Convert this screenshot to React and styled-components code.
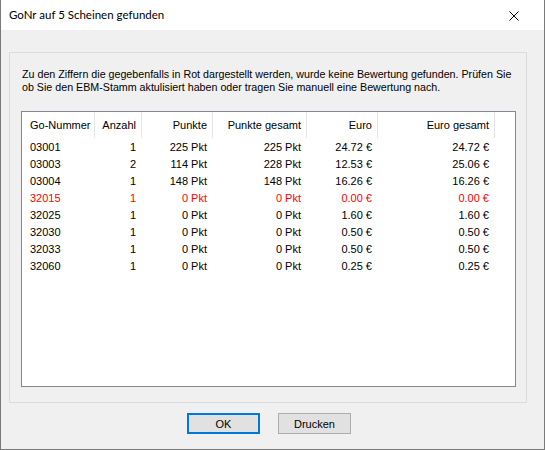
import React from 'react'
import styled, { createGlobalStyle } from 'styled-components'

const rows = [
    { nr: '03001', anzahl: 1, punkte: '225 Pkt', punkteGesamt: '225 Pkt', euro: '24.72 €', euroGesamt: '24.72 €' },
    { nr: '03003', anzahl: 2, punkte: '114 Pkt', punkteGesamt: '228 Pkt', euro: '12.53 €', euroGesamt: '25.06 €' },
    { nr: '03004', anzahl: 1, punkte: '148 Pkt', punkteGesamt: '148 Pkt', euro: '16.26 €', euroGesamt: '16.26 €' },
    { nr: '32015', anzahl: 1, punkte: '0 Pkt', punkteGesamt: '0 Pkt', euro: '0.00 €', euroGesamt: '0.00 €', missing: true },
    { nr: '32025', anzahl: 1, punkte: '0 Pkt', punkteGesamt: '0 Pkt', euro: '1.60 €', euroGesamt: '1.60 €' },
    { nr: '32030', anzahl: 1, punkte: '0 Pkt', punkteGesamt: '0 Pkt', euro: '0.50 €', euroGesamt: '0.50 €' },
    { nr: '32033', anzahl: 1, punkte: '0 Pkt', punkteGesamt: '0 Pkt', euro: '0.50 €', euroGesamt: '0.50 €' },
    { nr: '32060', anzahl: 1, punkte: '0 Pkt', punkteGesamt: '0 Pkt', euro: '0.25 €', euroGesamt: '0.25 €' },
]

const columns = [
    { key: 'nr', label: 'Go-Nummer', align: 'left' },
    { key: 'anzahl', label: 'Anzahl', align: 'right' },
    { key: 'punkte', label: 'Punkte', align: 'right' },
    { key: 'punkteGesamt', label: 'Punkte gesamt', align: 'right' },
    { key: 'euro', label: 'Euro', align: 'right' },
    { key: 'euroGesamt', label: 'Euro gesamt', align: 'right' },
]

export default function App() {
    return (
        <>
            <GlobalStyle />
            <Window>
                <TitleBar>
                    <Title>GoNr auf 5 Scheinen gefunden</Title>
                    <CloseButton aria-label="Schließen">
                        <svg width="10" height="10" viewBox="0 0 10 10">
                            <path d="M0.5 0.5 L9.5 9.5 M9.5 0.5 L0.5 9.5" stroke="#000" strokeWidth="1" />
                        </svg>
                    </CloseButton>
                </TitleBar>
                <Body>
                    <Group>
                        <Message>
                            Zu den Ziffern die gegebenfalls in Rot dargestellt werden, wurde keine Bewertung gefunden. Prüfen Sie
                            <br />
                            ob Sie den EBM-Stamm aktulisiert haben oder tragen Sie manuell eine Bewertung nach.
                        </Message>
                        <ListBox>
                            <HeaderRow>
                                {columns.map(c => (
                                    <HeaderCell key={c.key} $align={c.align}>{c.label}</HeaderCell>
                                ))}
                            </HeaderRow>
                            {rows.map(r => (
                                <Row key={r.nr} $missing={r.missing}>
                                    {columns.map(c => (
                                        <Cell key={c.key} $align={c.align}>{r[c.key]}</Cell>
                                    ))}
                                </Row>
                            ))}
                        </ListBox>
                    </Group>
                    <ButtonRow>
                        <Button $default>OK</Button>
                        <Button>Drucken</Button>
                    </ButtonRow>
                </Body>
            </Window>
        </>
    )
}

const GlobalStyle = createGlobalStyle`
    html, body {
        margin: 0;
        padding: 0;
        background: #f0f0f0;
    }
    body {
        font-family: "Liberation Sans", Arial, sans-serif;
        font-size: 11px;
        color: #000;
    }
`

const Window = styled.div`
    width: 545px;
    height: 450px;
    box-sizing: border-box;
    border: 1px solid #7a7a7a;
    border-top: none;
    background: #f0f0f0;
    display: flex;
    flex-direction: column;
`

const TitleBar = styled.div`
    height: 30px;
    background: #fff;
    display: flex;
    align-items: center;
    justify-content: space-between;
    padding: 0 0 0 8px;
`

const Title = styled.div`
    font-family: Lato, "Noto Sans", sans-serif;
    font-size: 11.5px;
    padding-bottom: 1px;
`

const CloseButton = styled.div`
    width: 46px;
    height: 30px;
    display: flex;
    align-items: center;
    justify-content: center;
    margin-right: 7px;
    padding-top: 2px;
    box-sizing: border-box;
`

const Body = styled.div`
    flex: 1;
    display: flex;
    flex-direction: column;
    padding: 22px 17px 0 8px;
`

const Group = styled.div`
    border: 1px solid #dcdcdc;
    height: 351px;
    box-sizing: border-box;
    padding: 15px 10px 0 11px;
    display: flex;
    flex-direction: column;
`

const Message = styled.p`
    margin: 0 0 17px 1px;
    line-height: 13px;
    font-size: 10.7px;
    white-space: nowrap;
`

const ListBox = styled.div`
    height: 276px;
    box-sizing: border-box;
    border: 1px solid #828790;
    background: #fff;
`

const grid = `
    display: grid;
    grid-template-columns: 73px 47px 71px 94px 71px 117px;
`

const HeaderRow = styled.div`
    ${grid}
    height: 26px;
`

const HeaderCell = styled.div`
    display: flex;
    align-items: center;
    justify-content: ${p => (p.$align === 'right' ? 'flex-end' : 'flex-start')};
    padding: 0 5px 0 8px;
    border-right: 1px solid #e5e5e5;
    white-space: nowrap;
`

const Row = styled.div`
    ${grid}
    height: 17px;
    color: ${p => (p.$missing ? '#ff0000' : '#000')};
`

const Cell = styled.div`
    display: flex;
    align-items: center;
    justify-content: ${p => (p.$align === 'right' ? 'flex-end' : 'flex-start')};
    padding: 0 6px 0 8px;
    white-space: nowrap;
`

const ButtonRow = styled.div`
    display: flex;
    gap: 18px;
    padding: 10px 0 0 178px;
`

const Button = styled.button`
    width: 73px;
    height: 21px;
    box-sizing: border-box;
    font-family: "Liberation Sans", Arial, sans-serif;
    font-size: 11px;
    color: #000;
    background: #e1e1e1;
    border: ${p => (p.$default ? '2px solid #0078d7' : '1px solid #adadad')};
    padding: 0;
`
